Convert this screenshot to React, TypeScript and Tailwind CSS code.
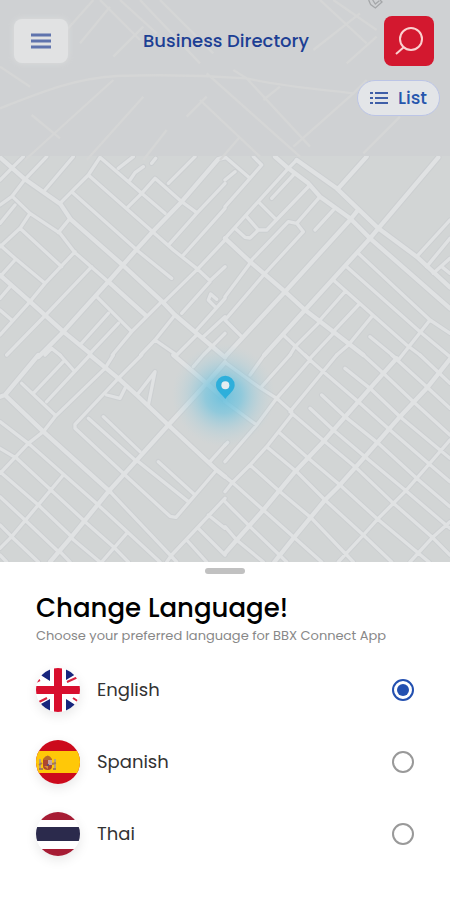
import { useState } from 'react';

const TILES = [
  {
    id: 'north-west',
    place: 'translate(0 450)',
    major:
      'M0 22L75 88L182 163L212 208L368 345L490 458L525 495L675 622M675 22L655 27L545 155L458 245L410 298L325 395L190 545L115 621M325 395L438 497M0 375L90 455L190 545L270 610',
    minor:
      'M40 142L90 190L180 250L225 308L325 395M290 440L395 545M215 125L405 295M265 75L458 245L520 300L590 355L630 392L675 350M300 22L425 130L495 190M180 160L215 125L265 75L300 22M175 248L210 205M410 300L515 385M385 170L425 130L465 85L545 155L590 188M355 55L400 20M390 90L405 68L430 50M455 40L467 25M505 100L585 20M135 120L220 20M75 88L140 20M40 50L70 20M0 90L40 50M510 280L590 190L675 100M550 315L675 175M595 355L675 270M490 458L595 355M545 490L630 395M590 540L675 445M645 470L625 450L632 432L650 448M610 560L675 500M525 495L465 570L422 615M337 615L395 545L485 455M465 570L530 615L590 555M240 585L325 490M270 610L355 520M0 285L45 325L135 400M0 555L90 455L135 400L225 305M20 615L140 492L275 350M60 235L185 350M0 290L60 235L90 190M0 220L45 165M35 140L75 88M0 165L35 140M0 480L35 510M0 380L45 330M0 445L30 410M135 615L155 595L180 615',
  },
  {
    id: 'north-east',
    place: 'translate(675 450)',
    major:
      'M640 22L460 235L435 265L240 480L118 615M215 30L335 115L460 235L575 320L675 412M150 20L190 55L250 100L285 140L375 205L435 265L675 475M340 115L425 20M0 265L75 335L180 425L240 480L325 545L415 615M0 620L180 425L375 210L395 185',
    minor:
      'M190 55L215 30M0 265L190 55M0 20L75 85L110 45L85 20M0 170L75 85M0 90L30 65M140 145L205 75M105 160L150 205M65 200L100 240M30 235L60 262L75 264L100 240L125 240L255 105M75 335L190 215L215 220L235 245L120 370M215 220L285 140M270 240L325 180M0 440L75 340M0 510L120 370M0 510L50 560M400 310L615 510L675 550M365 350L585 545L675 620M325 390L545 585L585 615M285 510L360 425M325 545L400 465M335 615L370 585L440 500M435 560L520 630L615 510M175 555L255 630M195 615L210 590L285 515M255 625L325 550M575 320L675 210M605 350L675 265M625 370L675 325M650 350L675 370',
  },
  {
    id: 'south-west',
    place: 'translate(0 1065)',
    major:
      'M675 22L620 85L505 210L415 310L325 410L215 545L150 621M0 125L15 120L115 0M15 120L130 230L330 410M270 0L355 70L410 120L505 210L650 345L675 365M520 0L620 85L675 135',
    minor:
      'M330 410L530 621M340 0L315 40L165 185L130 230L85 265L0 355M65 85L165 180M100 115L190 20M140 140L270 0M180 0L220 45M425 0L355 70L225 208L225 220L370 355M320 120L360 130L375 100M265 190L405 315M310 185L420 290M415 115L465 50L445 150M580 35L610 0L675 -65M415 320L565 440M475 320L585 420M375 360L510 484L528 487L650 345M630 320L675 270M500 621L515 600L675 430M560 555L620 621M595 520L675 600M625 480L675 520M85 265L295 450M50 310L250 495M300 455L480 621M255 500L340 575L385 621M0 200L85 265M0 280L50 310M0 350L115 450L215 545M0 425L75 495L170 585M0 510L35 545L115 621M0 580L35 545L190 360M305 621L380 535M215 550L300 621M0 600L20 621M180 590L210 621',
  },
  {
    id: 'south-east',
    place: 'translate(675 1065)',
    major:
      'M675 12L605 100L525 185L420 305L340 395L300 435L205 550L148 621M515 10L435 100L295 260L210 350L115 465L35 555L0 595',
    minor:
      'M0 22L100 95L155 130L200 170M0 140L95 210M335 0L195 170M200 180L125 275L75 330L20 385L0 410M240 0L255 15L155 130L95 210L0 320M110 95L195 0M75 60L118 0M255 15L295 50L400 140L495 225L610 325L675 380M255 160L325 225L420 305L540 405L675 520M290 120L360 185L460 265L575 370L675 455M200 175L300 260L390 335L500 440L620 545L675 600M165 235L250 310L345 390L455 490L612 621M125 275L215 350L300 435L415 540L500 621M75 330L165 410L260 490L385 621M0 365L25 385L115 465L210 550L290 621M0 440L75 515L185 621M0 515L35 555L115 621M360 40L435 100L525 185L645 285L675 310M415 0L475 55L570 145L675 240M500 0L605 95L675 160M585 0L675 85M675 255L610 330L540 410L460 490L415 540L340 621M675 500L620 550L555 621M0 270L8 262',
  },
];

const HAZY_STREETS =
  'M0 325C140 270 230 235 350 228C520 222 640 228 740 235C860 262 960 268 1060 280M0 200L90 260M95 345L180 415M75 480L340 240M260 480L430 290M430 480L500 390M600 300L780 470M620 220L900 470M700 210L740 235L930 440M560 350L620 290M790 300L840 260M660 480L720 410M880 440L1060 280L1100 240M1090 460L1200 350M240 130L330 20M200 90L280 0M300 0L420 120M360 0L470 100M420 0L600 190M480 0L640 160M340 170L430 80M940 150L1080 40M960 0L1100 130M1040 190L1130 110M1000 0L1130 90';

const LANGUAGES = [
  { id: 'en', name: 'English', Flag: UnitedKingdomFlag },
  { id: 'es', name: 'Spanish', Flag: SpainFlag },
  { id: 'th', name: 'Thai', Flag: ThailandFlag },
];

function UnitedKingdomFlag() {
  return (
    <svg viewBox="0 0 44 44" className="size-full" aria-hidden="true">
      <rect width="44" height="44" fill="#fff" />
      <path
        d="M3 6L11 0H14V13ZM30 0H33L40 6L30 12ZM3 37L14 31V44H11ZM30 31L41 38L33 44H30Z"
        fill="#17267d"
      />
      <path
        d="M0 14L4 12M31 14L42 9M1 35L11 30M37 30L43 34"
        stroke="#d8233f"
        strokeWidth="2"
      />
      <path d="M18 0H26V18H44V26H26V44H18V26H0V18H18Z" fill="#d80f2e" />
    </svg>
  );
}

function SpainFlag() {
  return (
    <svg viewBox="0 0 44 44" className="size-full" aria-hidden="true">
      <rect width="44" height="44" fill="#cc0a1c" />
      <rect y="11" width="44" height="22" fill="#ffc808" />
      <path d="M4 19V29M19 19V29" stroke="#b7a080" strokeWidth="2" />
      <path d="M3 29H7M17 29H20M3 25L6 23M16 24L20 23" stroke="#a67955" strokeWidth="2" />
      <path d="M7 19Q12 12 16 19V21H7Z" fill="#b9692a" />
      <path d="M7 20H16V26Q16 30 12 30Q7 30 7 26Z" fill="#ae472f" />
      <path d="M12 20H16V25H12Z" fill="#c7a4a0" />
      <path d="M8 26H12V29Z" fill="#d99035" />
      <circle cx="12" cy="25" r="1" fill="#4d4a83" />
    </svg>
  );
}

function ThailandFlag() {
  return (
    <svg viewBox="0 0 44 44" className="size-full" aria-hidden="true">
      <rect width="44" height="44" fill="#fff" />
      <rect width="44" height="8" fill="#a61c34" />
      <rect y="15" width="44" height="14" fill="#2b2a4c" />
      <rect y="37" width="44" height="7" fill="#a61c34" />
    </svg>
  );
}

function StreetMap() {
  return (
    <svg
      viewBox="0 0 1350 1686"
      preserveAspectRatio="xMidYMax slice"
      className="absolute inset-0 size-full"
      role="img"
      aria-label="Map"
    >
      <defs>
        <radialGradient id="glow">
          <stop offset="0" stopColor="#62bfde" stopOpacity="0.9" />
          <stop offset="0.35" stopColor="#74c4de" stopOpacity="0.7" />
          <stop offset="0.7" stopColor="#9accdd" stopOpacity="0.3" />
          <stop offset="1" stopColor="#b8d4dc" stopOpacity="0" />
        </radialGradient>
      </defs>
      <rect width="1350" height="1686" fill="#d2d5d5" />
      <g fill="none" strokeLinejoin="round" strokeLinecap="round">
        {TILES.map((tile) => (
          <g key={tile.id} transform={tile.place} stroke="#cccfd1">
            <path d={tile.minor} strokeWidth="16" />
            <path d={tile.major} strokeWidth="19" />
          </g>
        ))}
        {TILES.map((tile) => (
          <g key={tile.id} transform={tile.place} stroke="#e0e2e3">
            <path d={tile.minor} strokeWidth="10" />
            <path d={tile.major} strokeWidth="13" />
          </g>
        ))}
      </g>
      <rect width="1350" height="468" fill="#cfd1d3" />
      <path d={HAZY_STREETS} fill="none" stroke="#d5d6d6" strokeWidth="7" />
      <path
        d="M1106 0L1112 14L1126 24L1146 6L1140 0M1118 0L1126 12L1138 2"
        fill="none"
        stroke="#a5a7a9"
        strokeWidth="4"
      />
      <circle cx="670" cy="1186" r="155" fill="url(#glow)" />
      <path
        d="M676 1197C664 1181 648 1172 648 1155A28 28 0 0 1 704 1155C704 1172 688 1181 676 1197Z"
        fill="#2eafdb"
      />
      <circle cx="676" cy="1156" r="12" fill="#e4edf0" />
    </svg>
  );
}

const App = () => {
  const [language, setLanguage] = useState<string>('en');

  return (
    <div className="flex min-h-screen flex-col bg-white font-['Poppins','Inter',sans-serif]">
      <main className="relative min-h-96 flex-1 overflow-hidden">
        <StreetMap />
        <header className="relative flex items-center justify-between pt-4 pr-4 pl-3.5">
          <button
            type="button"
            aria-label="Menu"
            className="flex h-11 w-[54px] items-center justify-center rounded-lg bg-[#e1e2e3] shadow-[0_0_6px_#dcddde]"
          >
            <svg viewBox="0 0 20 16" className="h-4 w-5" aria-hidden="true">
              <path d="M0 2H20M0 8H20M0 14H20" stroke="#5f73ad" strokeWidth="3" />
            </svg>
          </button>
          <h1 className="text-lg font-medium text-[#1d3f94]">
            Business Directory
          </h1>
          <button
            type="button"
            aria-label="Search"
            className="flex size-[50px] items-center justify-center rounded-lg bg-[#d3182f]"
          >
            <svg
              viewBox="0 0 28 28"
              className="size-7"
              fill="none"
              stroke="#fbd0cf"
              strokeWidth="2"
              aria-hidden="true"
            >
              <circle cx="16" cy="12" r="11" />
              <path d="M9 20L1 27" />
            </svg>
          </button>
        </header>
        <div className="relative flex justify-end pt-3.5 pr-2.5">
          <button
            type="button"
            className="flex h-9 items-center gap-2.5 rounded-full border border-[#bcc5e6] bg-[#e3e5e8] px-3 text-lg font-medium text-[#2656ad]"
          >
            <svg viewBox="0 0 18 14" className="h-3.5 w-[18px]" aria-hidden="true">
              <path
                d="M0 2H3M5 2H18M0 7H3M5 7H18M0 12H3M5 12H18"
                stroke="#3f5fa8"
                strokeWidth="2"
              />
            </svg>
            List
          </button>
        </div>
      </main>

      <section className="bg-white px-9 pt-1.5 pb-[30px]">
        <div className="mx-auto h-1.5 w-10 rounded-full bg-[#c1c1c1]" />
        <h2 className="mt-4 text-[26px] leading-9 font-medium text-black">
          Change Language!
        </h2>
        <p className="text-[13px] leading-5 text-[#888]">
          Choose your preferred language for BBX Connect App
        </p>
        <fieldset className="mt-2" aria-label="Language">
          {LANGUAGES.map(({ id, name, Flag }) => (
            <label key={id} className="flex h-[72px] cursor-pointer items-center">
              <span className="size-11 overflow-hidden rounded-full shadow-[0_4px_12px_#00000018]">
                <Flag />
              </span>
              <span className="ml-[17px] flex-1 text-lg text-[#333]">{name}</span>
              <input
                type="radio"
                name="language"
                value={id}
                checked={language === id}
                onChange={() => setLanguage(id)}
                className="size-[22px] appearance-none rounded-full border-2 border-[#999] p-[3px] checked:border-[#2350b0] checked:bg-[#2350b0] checked:bg-clip-content"
              />
            </label>
          ))}
        </fieldset>
      </section>
    </div>
  );
};

export default App;
